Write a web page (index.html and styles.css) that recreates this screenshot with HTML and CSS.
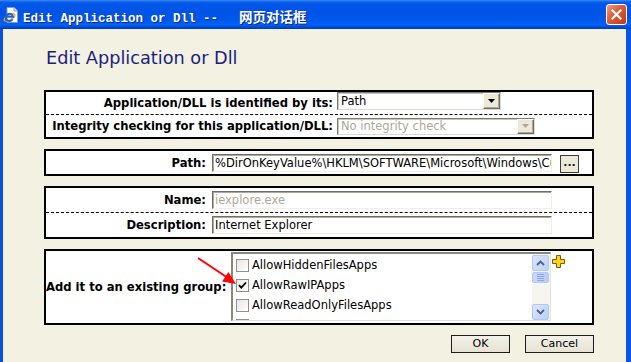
FILE: index.html
```html
<!DOCTYPE html>
<html>
<head>
<meta charset="utf-8">
<title>Edit Application or Dll</title>
<link rel="stylesheet" href="styles.css">
</head>
<body>
<div class="window">
  <div class="titlebar">
    <svg class="app-icon" viewBox="0 0 16 16" width="16" height="16">
      <path d="M4 0.5h7l3.5 3.5v11.5H4z" fill="#fff" stroke="#8a9ab5"/>
      <path d="M11 0.5v3.5h3.5" fill="#dfe6f3" stroke="#8a9ab5"/>
      <ellipse cx="6.5" cy="10.5" rx="6" ry="2.3" fill="none" stroke="#f2a31b" stroke-width="1.2" transform="rotate(-30 6.5 10.5)"/>
      <path d="M9.6 12.2a3.6 3.6 0 1 1 0.4-2.4H3.4" fill="none" stroke="#1f63d2" stroke-width="2"/>
    </svg>
    <span class="title">Edit Application or Dll --<span class="cjk">网页对话框</span></span>
    <div class="close">
      <svg viewBox="0 0 13 13" width="13" height="13"><path d="M2.5 2.5L10.5 10.5M10.5 2.5L2.5 10.5" stroke="#fff" stroke-width="2.2" stroke-linecap="square"/></svg>
    </div>
  </div>
  <div class="frame">
    <h1 class="heading">Edit Application or Dll</h1>

    <div class="box">
      <div class="row row-22 sep">
        <div class="label label-wide">Application/DLL is identified by its:</div>
        <div class="select select-path top">
          <span class="sel-text">Path</span>
          <span class="sel-btn"><svg viewBox="0 0 7 4" width="7" height="4"><path d="M0 0h7L3.5 4z" fill="#000"/></svg></span>
        </div>
      </div>
      <div class="row row-22">
        <div class="label label-wide">Integrity checking for this application/DLL:</div>
        <div class="select select-integrity disabled">
          <span class="sel-text">No integrity check</span>
          <span class="sel-btn"><svg viewBox="0 0 7 4" width="7" height="4"><path d="M0 0h7L3.5 4z" fill="#aca899"/></svg></span>
        </div>
      </div>
    </div>

    <div class="box">
      <div class="row row-23">
        <div class="label label-mid">Path:</div>
        <div class="input input-long"><span class="clip">%DirOnKeyValue%\HKLM\SOFTWARE\Microsoft\Windows\CurrentVersion\App Paths\IEXPLORE.EXE\Path</span></div>
        <div class="browse">...</div>
      </div>
    </div>

    <div class="box">
      <div class="row row-24 sep">
        <div class="label label-mid">Name:</div>
        <div class="input input-long muted">iexplore.exe</div>
      </div>
      <div class="row row-24">
        <div class="label label-mid">Description:</div>
        <div class="input input-long">Internet Explorer</div>
      </div>
    </div>

    <div class="box box-group">
      <div class="row row-72">
        <div class="label label-group">Add it to an existing group:</div>
        <div class="list">
          <div class="items">
            <div class="item"><span class="check"></span><span>AllowHiddenFilesApps</span></div>
            <div class="item"><span class="check checked"><svg viewBox="0 0 9 9" width="9" height="9"><path d="M1 4.2l2.3 2.5L8 1.5" fill="none" stroke="#000" stroke-width="1.8"/></svg></span><span>AllowRawIPApps</span></div>
            <div class="item"><span class="check"></span><span>AllowReadOnlyFilesApps</span></div>
            <div class="item"><span class="check"></span></div>
          </div>
          <div class="scrollbar">
            <div class="sb-btn"><svg viewBox="0 0 9 6" width="9" height="6"><path d="M1 5l3.5-3.5L8 5" fill="none" stroke="#4d6185" stroke-width="1.8"/></svg></div>
            <div class="sb-thumb"><span></span><span></span><span></span><span></span></div>
            <div class="sb-track"></div>
            <div class="sb-btn"><svg viewBox="0 0 9 6" width="9" height="6"><path d="M1 1l3.5 3.5L8 1" fill="none" stroke="#4d6185" stroke-width="1.8"/></svg></div>
          </div>
        </div>
        <svg class="plus" viewBox="0 0 13 13" width="13" height="13">
          <path d="M4.5 0.5h4v4h4v4h-4v4h-4v-4h-4v-4h4z" fill="#ffd21a" stroke="#7a5a00"/>
        </svg>
      </div>
      <svg class="arrow" viewBox="0 0 50 38" width="50" height="38">
        <line x1="8" y1="6" x2="38" y2="26" stroke="#ff0000" stroke-width="2"/>
        <polygon points="46,32 32.2,29.4 38.4,20.1" fill="#ff0000"/>
      </svg>
    </div>

    <div class="buttons">
      <div class="btn btn-ok">OK</div>
      <div class="btn btn-cancel">Cancel</div>
    </div>
  </div>
</div>
</body>
</html>
```

FILE: styles.css
```css
* { box-sizing: border-box; }
html, body { margin: 0; padding: 0; }
body {
  width: 631px;
  height: 362px;
  overflow: hidden;
  font-family: "DejaVu Sans", Verdana, sans-serif;
  background: #f2f1e2;
}
.window {
  width: 631px;
  height: 362px;
  display: flex;
  flex-direction: column;
}
.titlebar {
  height: 29px;
  flex: none;
  display: flex;
  align-items: center;
  padding-left: 3px;
  padding-right: 4px;
  background: linear-gradient(to bottom, #3d8ef8 0px, #0b61ea 2px, #0256ea 4px, #0053e4 12px, #0057ec 20px, #0062f6 25px, #004bd6 27px, #003cbd 29px);
}
.app-icon { flex: none; margin-top: 1px; }
.title {
  margin-left: 4px;
  padding-top: 3px;
  color: #fff;
  font-family: "Liberation Mono", monospace;
  font-weight: bold;
  font-size: 12.5px;
  white-space: nowrap;
  text-shadow: 1px 1px 0 #0a2a8c;
}
.title .cjk {
  font-family: "Noto Sans CJK SC", sans-serif;
  font-size: 13.5px;
  margin-left: 21px;
}
.close {
  margin-left: auto;
  width: 21px;
  height: 21px;
  border: 1px solid #fff;
  border-radius: 3px;
  background: linear-gradient(135deg, #f0a080 0%, #e0603a 40%, #cc4520 80%, #b83a14 100%);
  display: flex;
  align-items: center;
  justify-content: center;
}
.frame {
  flex: 1;
  border-left: 3px solid #0a50dc;
  border-right: 5px solid #0a55e4;
  padding: 18px 32px 0 41px;
  display: flex;
  flex-direction: column;
}
.heading {
  margin: 0;
  padding-left: 2px;
  height: 22px;
  line-height: 22px;
  font-size: 17.7px;
  font-weight: normal;
  color: #1b1d80;
}
.box {
  margin-top: 10px;
  border: 2px solid #000;
  background: #fff;
  position: relative;
}
.heading + .box { margin-top: 21px; }
.row {
  display: flex;
  align-items: center;
}
.row-22 { height: 22px; }
.row-22.sep { height: 23px; }
.row-23 { height: 23px; }
.row-24 { height: 24px; }
.row-24.sep { height: 25px; }
.row-72 { height: 72px; }
.sep { border-bottom: 1px dashed #000; }
.label {
  flex: none;
  font-weight: bold;
  font-size: 11.6px;
  color: #000;
  text-align: right;
  white-space: nowrap;
}
.label-wide { width: 291px; padding-right: 4px; }
.label-mid { width: 166px; padding-right: 6px; }
.label-group { width: 185px; padding-right: 5px; }

.select {
  display: flex;
  align-items: center;
  height: 18px;
  background: #fff;
  border: 1px solid;
  border-color: #7a7a72 #dcdad0 #dcdad0 #7a7a72;
  box-shadow: inset 1px 1px 0 #c8c6bc;
  font-size: 11.5px;
  padding-left: 3px;
}
.select.top { align-self: flex-start; }
.select-path { width: 164px; }
.select-integrity { width: 198px; height: 17px; }
.sel-text { flex: 1; white-space: nowrap; overflow: hidden; }
.disabled .sel-text { color: #aca899; }
.sel-btn {
  flex: none;
  width: 17px;
  height: 16px;
  background: #ece9d8;
  border: 1px solid;
  border-color: #fff #716f64 #716f64 #fff;
  box-shadow: inset -1px -1px 0 #aca899;
  display: flex;
  align-items: center;
  justify-content: center;
}
.disabled .sel-btn { height: 15px; }

.input {
  flex: none;
  height: 18px;
  line-height: 15px;
  background: #fff;
  border: 1px solid;
  border-color: #716f64 #f1efe2 #f1efe2 #716f64;
  box-shadow: inset 1px 1px 0 #aca899;
  font-size: 11.5px;
  padding-left: 2px;
  padding-top: 1px;
  white-space: nowrap;
  overflow: hidden;
  color: #000;
}
.input .clip { display: block; overflow: hidden; }
.input-long { width: 340px; }
.muted { color: #aca899; }
.browse {
  flex: none;
  margin-left: 8px;
  width: 19px;
  height: 18px;
  margin-top: 2px;
  background: #ece9d8;
  border: 1px solid #3c3c3c;
  font-size: 11px;
  font-weight: bold;
  line-height: 14px;
  text-align: center;
  color: #1a1a1a;
  overflow: hidden;
}

.list {
  align-self: flex-start;
  margin-top: 1px;
  width: 320px;
  height: 69px;
  display: flex;
  background: #fff;
  border-style: solid;
  border-width: 2px 1px 1px 2px;
  border-color: #8a887c #e4e2d6 #e4e2d6 #8a887c;
  overflow: hidden;
}
.items {
  flex: 1;
  padding-top: 1px;
  padding-left: 3px;
}
.item {
  height: 20px;
  display: flex;
  align-items: center;
  font-size: 11.5px;
  white-space: nowrap;
}
.check {
  flex: none;
  width: 13px;
  height: 13px;
  margin-right: 3px;
  border: 1px solid #8f8f8f;
  background: linear-gradient(135deg, #e8e7e2, #fff);
  display: flex;
  align-items: center;
  justify-content: center;
}
.scrollbar {
  flex: none;
  width: 18px;
  display: flex;
  flex-direction: column;
  background: #f6f5ef;
  padding: 1px 1px 0 0;
}
.sb-btn {
  flex: none;
  height: 16px;
  border: 1px solid #b4c8f4;
  border-radius: 2px;
  background: linear-gradient(135deg, #dbe6fe, #bcd0fb);
  display: flex;
  align-items: center;
  justify-content: center;
}
.sb-thumb {
  flex: none;
  height: 11px;
  margin-top: 1px;
  border: 1px solid #b4c8f4;
  border-radius: 2px;
  background: linear-gradient(90deg, #c9d9fd, #b9cdfa);
  display: flex;
  flex-direction: column;
  justify-content: center;
  align-items: center;
  gap: 1px;
}
.sb-thumb span {
  width: 7px;
  height: 1px;
  background: #8da8e4;
}
.sb-track { flex: 1; }
.plus {
  align-self: flex-start;
  margin-top: 4px;
  margin-left: 1px;
}
.arrow {
  position: absolute;
  left: 144px;
  top: 1px;
}

.buttons {
  margin-top: 10px;
  display: flex;
  justify-content: flex-end;
  gap: 15px;
}
.btn {
  height: 18px;
  background: linear-gradient(#f2f1e8, #e6e3d5);
  border: 1px solid #1c1c1c;
  font-size: 11px;
  line-height: 15px;
  text-align: center;
  color: #000;
}
.btn-ok { width: 59px; }
.btn-cancel { width: 69px; }
```
